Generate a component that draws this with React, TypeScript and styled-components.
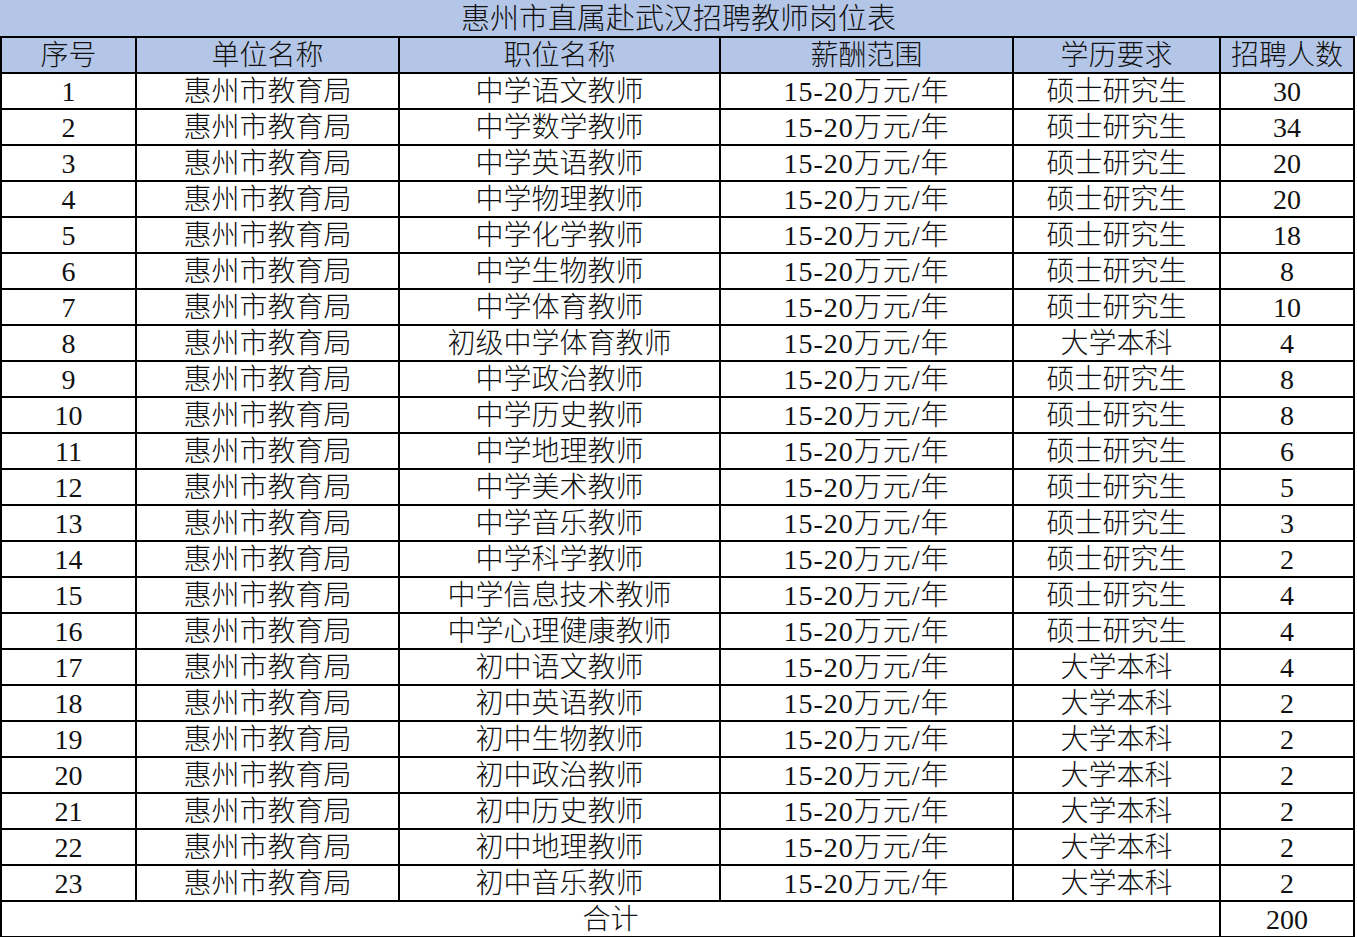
import { createGlobalStyle, styled } from "styled-components";

const GlobalStyle = createGlobalStyle`
  html, body {
    margin: 0;
    padding: 0;
    background: #fff;
  }
  body {
    font-family: "Liberation Serif", "Noto Sans CJK SC", serif;
    color: #111;
  }
`;

const Page = styled.div`
  width: 1357px;
`;

const Title = styled.div`
  height: 36px;
  line-height: 38px;
  background: #b4c6e7;
  text-align: center;
  font-size: 29px;
  font-weight: 300;
`;

const Table = styled.table`
  width: 1355px;
  border-collapse: collapse;
  table-layout: fixed;
  margin-left: 0;
`;

const Cell = styled.td<{ $head?: boolean; $wide?: boolean }>`
  border: 2px solid #000;
  padding: 2px 0 0;
  text-align: center;
  vertical-align: middle;
  font-size: 28px;
  font-weight: 300;
  line-height: 32px;
  letter-spacing: ${(p) => (p.$wide ? "1px" : "0")};
  background: ${(p) => (p.$head ? "#b4c6e7" : "#fff")};
  white-space: nowrap;
  overflow: hidden;
`;

const widths = [135, 263, 321, 293, 207, 134];
const heads = ["序号", "单位名称", "职位名称", "薪酬范围", "学历要求", "招聘人数"];

const M = "硕士研究生";
const B = "大学本科";
const rows: [string, string, number][] = [
  ["中学语文教师", M, 30],
  ["中学数学教师", M, 34],
  ["中学英语教师", M, 20],
  ["中学物理教师", M, 20],
  ["中学化学教师", M, 18],
  ["中学生物教师", M, 8],
  ["中学体育教师", M, 10],
  ["初级中学体育教师", B, 4],
  ["中学政治教师", M, 8],
  ["中学历史教师", M, 8],
  ["中学地理教师", M, 6],
  ["中学美术教师", M, 5],
  ["中学音乐教师", M, 3],
  ["中学科学教师", M, 2],
  ["中学信息技术教师", M, 4],
  ["中学心理健康教师", M, 4],
  ["初中语文教师", B, 4],
  ["初中英语教师", B, 2],
  ["初中生物教师", B, 2],
  ["初中政治教师", B, 2],
  ["初中历史教师", B, 2],
  ["初中地理教师", B, 2],
  ["初中音乐教师", B, 2],
];

const App = () => {
  const total = rows.reduce((s, r) => s + r[2], 0);
  return (
    <Page>
      <GlobalStyle />
      <Title>惠州市直属赴武汉招聘教师岗位表</Title>
      <Table>
        <colgroup>
          {widths.map((w, i) => (
            <col key={i} style={{ width: w }} />
          ))}
        </colgroup>
        <thead>
          <tr>
            {heads.map((h) => (
              <Cell as="th" $head key={h}>
                {h}
              </Cell>
            ))}
          </tr>
        </thead>
        <tbody>
          {rows.map((r, i) => (
            <tr key={i}>
              <Cell>{i + 1}</Cell>
              <Cell>惠州市教育局</Cell>
              <Cell>{r[0]}</Cell>
              <Cell $wide>15-20万元/年</Cell>
              <Cell>{r[1]}</Cell>
              <Cell>{r[2]}</Cell>
            </tr>
          ))}
          <tr>
            <Cell colSpan={5}>合计</Cell>
            <Cell>{total}</Cell>
          </tr>
        </tbody>
      </Table>
    </Page>
  );
};

export default App;
